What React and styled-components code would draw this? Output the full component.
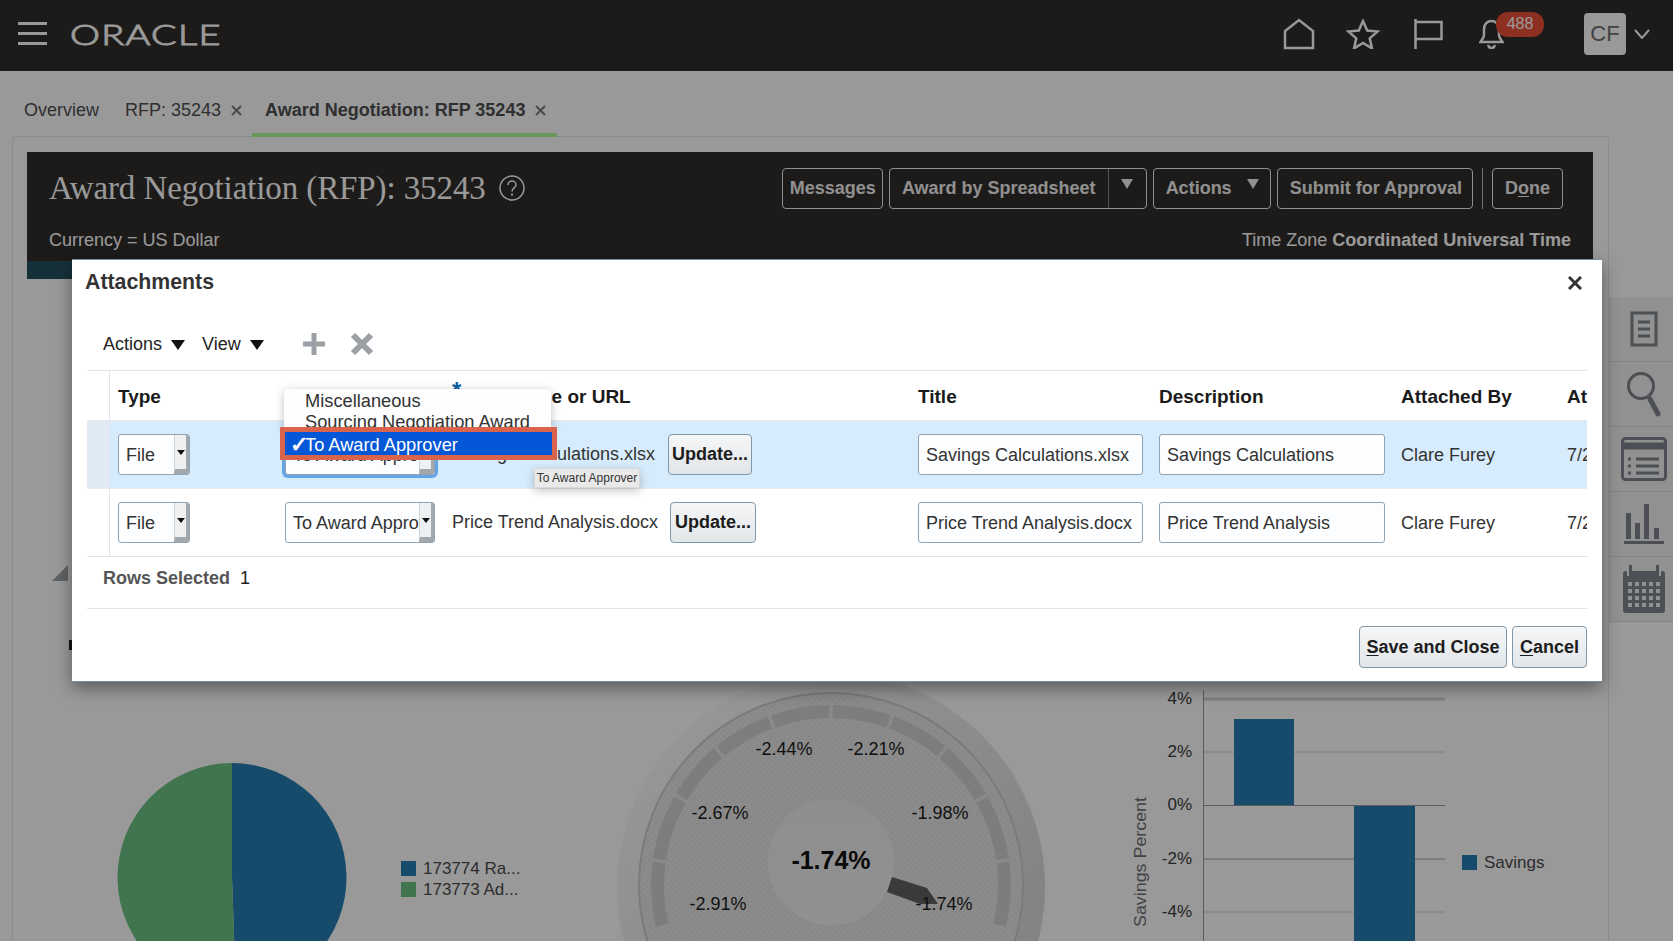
import styled, { createGlobalStyle } from "styled-components";

const Global = createGlobalStyle`
  html, body { margin: 0; padding: 0; background: #fff; }
  body { font-family: "Liberation Sans", Arial, sans-serif; font-size: 18px; color: #333; }
  * { box-sizing: border-box; }
`;

const Page = styled.div`
  position: relative;
  width: 1673px;
  height: 941px;
  overflow: hidden;
  background: #fff;
`;

const Scrim = styled.div`
  position: absolute;
  inset: 0;
  background: rgba(0, 0, 0, 0.4);
`;

/* top bar */
const TopBar = styled.header`
  height: 71px;
  background: #302d2b;
  display: flex;
  align-items: center;
  padding: 0 23px 4px 18px;
  color: #fff;
`;

const Burger = styled.div`
  width: 29px;
  height: 23px;
  display: flex;
  flex-direction: column;
  justify-content: space-between;
  margin-right: 23px;
  span {
    display: block;
    height: 3px;
    background: #fff;
  }
`;

const Logo = styled.div`
  font-family: "Lato", sans-serif;
  font-weight: 300;
  font-size: 28px;
  letter-spacing: 1px;
  transform: scaleX(1.35);
  transform-origin: left center;
  -webkit-text-stroke: 1px #fff;
`;

const TopIcons = styled.div`
  margin-left: auto;
  display: flex;
  align-items: center;
`;

const IconBtn = styled.div`
  position: relative;
  display: flex;
  margin-right: ${(p) => p.$gap}px;
`;

const Badge = styled.span`
  position: absolute;
  left: 17px;
  top: -7px;
  width: 48px;
  height: 25px;
  border-radius: 12px;
  background: #ed5138;
  color: #fff;
  font-size: 16px;
  text-align: center;
  line-height: 24px;
`;

const Avatar = styled.div`
  width: 42px;
  height: 42px;
  border-radius: 4px;
  background: #fff;
  color: #6d6d6d;
  font-size: 22px;
  display: flex;
  align-items: center;
  justify-content: center;
  margin-right: 8px;
  margin-top: 1px;
`;

/* tabs */
const Tabs = styled.nav`
  height: 65px;
  display: flex;
  align-items: flex-end;
  padding-left: 12px;
`;

const Tab = styled.div`
  height: ${(p) => (p.$active ? 66 : 62)}px;
  width: ${(p) => p.$w}px;
  padding-left: ${(p) => p.$pl}px;
  margin-bottom: ${(p) => (p.$active ? -1 : 0)}px;
  display: flex;
  align-items: flex-end;
  padding-bottom: ${(p) => (p.$active ? 12 : 15)}px;
  font-size: 18px;
  line-height: 21px;
  color: #2f2f2f;
  font-weight: ${(p) => (p.$active ? 700 : 400)};
  border-bottom: ${(p) => (p.$active ? "4px solid #68985c" : "none")};
  position: relative;
  z-index: 1;
  white-space: nowrap;
  svg {
    margin: 0 0 5px 10px;
    flex: none;
  }
`;

const Body = styled.div`
  display: flex;
  height: 805px;
`;

const Panel = styled.main`
  width: 1597px;
  margin-left: 12px;
  border: 1px solid #e6ebf0;
  border-bottom: none;
  border-radius: 3px 3px 0 0;
  padding: 15px 15px 0 14px;
`;

const Band = styled.section`
  height: 127px;
  background: linear-gradient(#302d2b 109px, transparent 109px),
    linear-gradient(90deg, #24505f, #3e7183 50%, #2d5b6d);
  color: #fff;
  padding: 15px 22px 0 22px;
`;

const BandRow = styled.div`
  display: flex;
  align-items: center;
  justify-content: space-between;
`;

const Heading = styled.h1`
  margin: 0;
  font-family: "Liberation Serif", Georgia, serif;
  font-weight: 400;
  font-size: 33px;
  letter-spacing: -0.1px;
  line-height: 42px;
  display: flex;
  align-items: center;
  gap: 13px;
  svg { flex: none; }
`;

const Buttons = styled.div`
  display: flex;
  align-items: center;
  gap: 6px;
  margin-right: 8px;
`;

const DarkBtn = styled.div`
  height: 41px;
  padding: 0 ${(p) => p.$pad || 12}px 0 ${(p) => p.$padL || 12}px;
  border: 1px solid #f0f0f0;
  border-radius: 4px;
  display: flex;
  align-items: center;
  position: relative;
  font-weight: 700;
  font-size: 18px;
  color: #f0f0f0;
  u { text-underline-offset: 2px; }
`;

const Caret = styled.span`
  width: 0;
  height: 0;
  border-left: ${(p) => p.$half || 7}px solid transparent;
  border-right: ${(p) => p.$half || 7}px solid transparent;
  border-top: ${(p) => p.$h || 10}px solid ${(p) => p.$color || "#f0f0f0"};
  margin-left: ${(p) => p.$ml || 0}px;
  transform: translateY(${(p) => p.$up || 0}px);
  display: inline-block;
`;

const BtnSplit = styled.span`
  width: 1px;
  align-self: stretch;
  background: #8c8c8c;
  margin: 0 12px;
`;

const BtnRule = styled.span`
  width: 1px;
  height: 41px;
  background: #bdbdbd;
  margin: 0 3px 0 3px;
`;

const SubRow = styled(BandRow)`
  margin-top: 21px;
  font-size: 18px;
`;

const Charts = styled.div`
  display: grid;
  grid-template-columns: 563px 485px 518px;
  height: 662px;
  overflow: hidden;
  svg {
    display: block;
    font-family: "Liberation Sans", Arial, sans-serif;
  }
`;

/* right rail */
const Rail = styled.aside`
  width: 64px;
  margin-top: 161px;
  display: flex;
  flex-direction: column;
  align-self: flex-start;
  background: #f2f2f2;
  border-left: 1px solid #e3e3e3;
`;

const RailItem = styled.div`
  height: 65px;
  display: flex;
  align-items: center;
  justify-content: center;
  border-bottom: 1px solid #dcdcdc;
  padding-left: 4px;
`;

/* dialog */
const Dialog = styled.div`
  position: absolute;
  left: 72px;
  top: 259px;
  width: 1530px;
  height: 423px;
  background: #fff;
  border-top: 1px solid #6f93ad;
  border-bottom: 1px solid #6f93ad;
  box-shadow: 0 6px 16px rgba(0, 0, 0, 0.4);
  padding: 0 15px;
  color: #333;
`;

const DialogHead = styled.div`
  height: 47px;
  margin: 0 -2px;
  display: flex;
  align-items: center;
  justify-content: space-between;
  padding: 0 7px 2px 0;
`;

const DialogTitle = styled.h2`
  margin: 0;
  font-size: 21.3px;
  font-weight: 700;
  color: #333;
`;

const Toolbar = styled.div`
  height: 63px;
  padding: 10px 0 0 16px;
  display: flex;
  align-items: center;
`;

const ToolMenu = styled.div`
  display: flex;
  align-items: center;
  gap: 9px;
  margin-right: 17px;
  padding-top: 2px;
  font-size: 18px;
  color: #222;
`;

const ToolIcon = styled.div`
  display: flex;
  margin-left: ${(p) => p.$ml}px;
`;

const Table = styled.div`
  border-top: 1px solid #dfe4e8;
  border-bottom: 1px solid #dfe4e8;
  overflow: hidden;
`;

const Row = styled.div`
  display: grid;
  grid-template-columns: 23px 167px 167px 466px 241px 242px 166px 28px;
  height: ${(p) => p.$h}px;
  align-items: center;
  background: ${(p) => (p.$selected ? "#d6ebfc" : "transparent")};
  border-bottom: ${(p) => (p.$last ? "none" : "1px solid #e8ecef")};
`;

const Gutter = styled.div`
  align-self: stretch;
  background: ${(p) => (p.$selected ? "#dfeaf4" : "transparent")};
  border-right: 1px solid #dfe4e8;
`;

const Cell = styled.div`
  padding-left: 8px;
  white-space: nowrap;
  overflow: ${(p) => (p.$open ? "visible" : "hidden")};
  font-size: 18px;
  color: #333;
`;

const TextCell = styled(Cell)`
  padding-top: 2px;
`;

const HeadCell = styled(Cell)`
  font-weight: 700;
  font-size: 19px;
  color: #1a1a1a;
  padding-top: 2px;
  overflow: ${(p) => (p.$clip ? "hidden" : "visible")};
  b {
    color: #0a5fa8;
    font-size: 24px;
    line-height: 10px;
    position: relative;
    top: -4px;
    margin-right: 11px;
  }
`;

const FileCell = styled(Cell)`
  display: flex;
  align-items: center;
  gap: ${(p) => p.$gap}px;
  overflow: visible;
`;

const Select = styled.div`
  width: ${(p) => p.$w}px;
  height: 41px;
  display: flex;
  background: #fcfdfe;
  border: 1px solid #8fa3b3;
  border-radius: 3px;
  box-shadow: ${(p) => (p.$focus ? "0 0 0 3px #62a6e6" : "none")};
  overflow: hidden;
`;

const SelectText = styled.span`
  flex: 1;
  min-width: 0;
  overflow: hidden;
  white-space: nowrap;
  padding-left: 7px;
  line-height: 41px;
  font-size: 18px;
`;

const SelectArrow = styled.span`
  width: 15px;
  flex: none;
  display: flex;
  align-items: center;
  justify-content: center;
  background: #eef0f1;
  border-left: 1px solid #cfd3d6;
  border-right: 3px solid #a3a8ac;
  border-bottom: 5px solid #a3a8ac;
`;

const Button = styled.div`
  height: ${(p) => p.$h || 41}px;
  width: ${(p) => p.$w}px;
  display: flex;
  align-items: center;
  justify-content: center;
  flex: none;
  border: 1px solid #7f98aa;
  border-radius: 4px;
  background: linear-gradient(#f5f6f7, #e2e6e9);
  font-weight: 700;
  font-size: 18px;
  color: #1c1c1c;
  white-space: nowrap;
  u { text-underline-offset: 2px; }
`;

const Input = styled.div`
  width: ${(p) => p.$w}px;
  height: 41px;
  padding-left: 7px;
  line-height: 41px;
  background: #fcfdfe;
  border: 1px solid #8fa3b3;
  border-radius: 3px;
  font-size: 18px;
  overflow: hidden;
`;

const RowsInfo = styled.div`
  height: 52px;
  padding: 11px 0 0 16px;
  border-bottom: 1px solid #dfe4e8;
  font-size: 18px;
  color: #1f1f1f;
  strong { color: #555; margin-right: 5px; }
`;

const DialogFoot = styled.div`
  display: flex;
  justify-content: flex-end;
  gap: 5px;
  padding-top: 17px;
`;

const Menu = styled.div`
  position: absolute;
  left: 212px;
  top: 129px;
  width: 267px;
  height: 40px;
  padding: 1px 0 0 21px;
  background: #fdfdfe;
  border-radius: 4px 4px 0 0;
  box-shadow: 0 2px 10px rgba(0, 0, 0, 0.25);
  font-size: 18.25px;
  line-height: 21px;
  color: #333;
  overflow: hidden;
`;

const Picked = styled.div`
  position: absolute;
  left: 208px;
  top: 167px;
  width: 277px;
  height: 33px;
  border: 5px solid #d9634b;
  background: #0457d6;
  color: #fff;
  font-size: 18.25px;
  line-height: 25px;
  padding-left: 5px;
  display: flex;
  span {
    width: 15px;
    font-size: 22px;
    font-weight: 700;
  }
`;

const Tooltip = styled.div`
  position: absolute;
  left: 462px;
  top: 208px;
  width: 106px;
  height: 20px;
  background: #e9e9e9;
  border: 1px solid #d8d8d8;
  box-shadow: 0 3px 10px rgba(0, 0, 0, 0.22);
  font-size: 12px;
  line-height: 18px;
  text-align: center;
  color: #333;
`;

const arc = (r, a) => {
  const t = (a * Math.PI) / 180;
  return [831 + r * Math.sin(t), 885 - r * Math.cos(t)];
};

const segment = (a, b) => {
  const [x1, y1] = arc(180, a);
  const [x2, y2] = arc(180, b);
  const [x3, y3] = arc(167, b);
  const [x4, y4] = arc(167, a);
  return `M${x1} ${y1}A180 180 0 0 1 ${x2} ${y2}L${x3} ${y3}A167 167 0 0 0 ${x4} ${y4}Z`;
};

const stops = [-104, -82, -60, -40, -20, 0, 20, 40, 60, 82, 104];

const gaugeLabels = [
  ["-2.44%", 784, 749],
  ["-2.21%", 876, 749],
  ["-2.67%", 720, 813],
  ["-1.98%", 940, 813],
  ["-2.91%", 718, 904],
  ["-1.74%", 944, 904],
];

const PieChart = () => (
  <svg width="563" height="662" viewBox="27 279 563 662">
    <polygon points="68,565 68,581 52,581" fill="#9ea3a8" />
    <rect x="69" y="640" width="4" height="10" fill="#222" />
    <path d="M232 877.5L232 763A114.500 114.500 0 0 1 236 991.930Z" fill="#257db3" />
    <path d="M232 877.5L232 763A114.500 114.500 0 1 0 236 991.930Z" fill="#6bc384" />
    <rect x="401" y="861" width="15" height="15" fill="#257db3" />
    <rect x="401" y="882" width="15" height="15" fill="#6bc384" />
    <text x="423" y="874" fontSize="17" fill="#4c4c4c">173774 Ra...</text>
    <text x="423" y="895" fontSize="17" fill="#4c4c4c">173773 Ad...</text>
  </svg>
);

const GaugeChart = () => (
  <svg width="485" height="662" viewBox="590 279 485 662">
    <defs>
      <pattern id="dots" width="6" height="6" patternUnits="userSpaceOnUse">
        <rect width="6" height="6" fill="#e8e8e8" />
        <circle cx="1.500" cy="1.500" r="1" fill="#dcdcdc" />
        <circle cx="4.500" cy="4.500" r="1" fill="#dcdcdc" />
      </pattern>
      <linearGradient id="rim" x1="0" y1="0" x2="1" y2="1">
        <stop offset="0.1" stopColor="#fcfcfc" />
        <stop offset="0.75" stopColor="#dcdcdc" />
      </linearGradient>
      <linearGradient id="hub" x1="0" y1="0" x2="0" y2="1">
        <stop offset="0" stopColor="#ededed" />
        <stop offset="1" stopColor="#f2f2f2" />
      </linearGradient>
    </defs>
    <circle cx="831" cy="887" r="214" fill="url(#rim)" />
    <circle cx="831" cy="885" r="192" fill="url(#dots)" stroke="#cdcdcd" strokeWidth="2" />
    {stops.slice(0, -1).map((a, i) => (
      <path key={a} d={segment(a + 0.6, stops[i + 1] - 0.6)} fill="#d0d0d0" />
    ))}
    <circle cx="831" cy="862" r="63" fill="url(#hub)" />
    <polygon points="892,877 927,888 938,904 920,904 887,892" fill="#616161" />
    {gaugeLabels.map(([t, x, y]) => (
      <text key={t + x} x={x} y={y + 6} fontSize="18" fill="#1b1b1b" textAnchor="middle">{t}</text>
    ))}
    <text x="831" y="869" fontSize="25" fontWeight="700" fill="#111" textAnchor="middle">-1.74%</text>
  </svg>
);

const BarChart = () => (
  <svg width="518" height="662" viewBox="1075 279 518 662">
    {[[699, "4%", 3], [752, "2%", 1], [805, "0%", 0], [859, "-2%", 2], [912, "-4%", 1]].map(([y, t, w]) => (
      <g key={t}>
        {w > 0 && <line x1="1203" x2="1445" y1={y} y2={y} stroke="#d2d2d2" strokeWidth={w} />}
        <text x="1192" y={y + 5} fontSize="17" fill="#3c3c3c" textAnchor="end">{t}</text>
      </g>
    ))}
    <rect x="1234" y="719" width="60" height="86" fill="#257db3" />
    <rect x="1354" y="805" width="61" height="140" fill="#257db3" />
    <line x1="1203.500" x2="1203.500" y1="690" y2="941" stroke="#9c9c9c" />
    <line x1="1203" x2="1445" y1="805.500" y2="805.500" stroke="#9c9c9c" />
    <rect x="1462" y="855" width="15" height="15" fill="#257db3" />
    <text x="1484" y="868" fontSize="17" fill="#4c4c4c">Savings</text>
    <text transform="translate(1146 862) rotate(-90)" fontSize="17" fill="#6e6e6e" textAnchor="middle" textLength="130" lengthAdjust="spacingAndGlyphs">Savings Percent</text>
  </svg>
);

const railIcons = [
  <svg key="doc" width="28" height="36" viewBox="0 0 28 36" fill="none" stroke="#7f868c" strokeWidth="3"><rect x="2" y="2" width="24" height="32" /><path d="M8 11h12M8 18h12M8 25h12" /></svg>,
  <svg key="search" width="36" height="46" viewBox="0 0 36 46" fill="none" stroke="#7f868c"><circle cx="15" cy="15" r="12.500" strokeWidth="3" /><path d="M24 28l8 15" strokeWidth="5" strokeLinecap="round" /></svg>,
  <svg key="list" width="46" height="44" viewBox="0 0 46 44" fill="none" stroke="#7f868c" strokeWidth="3"><rect x="1.500" y="1.500" width="43" height="41" rx="3" /><path d="M1 9h44" strokeWidth="7" /><path d="M7 22h3M15 22h23M7 29h3M15 29h23M7 36h3M15 36h23" /></svg>,
  <svg key="bars" width="40" height="40" viewBox="0 0 40 40" fill="#7f868c"><rect x="2" y="9" width="5" height="26" /><rect x="11" y="19" width="5" height="16" /><rect x="20" y="0" width="5" height="35" /><rect x="30" y="24" width="5" height="11" /><rect x="0" y="37" width="40" height="3" /></svg>,
  <svg key="cal" width="44" height="48" viewBox="0 0 44 48"><rect x="1" y="6" width="42" height="42" rx="3" fill="#7f868c" /><rect x="7" y="0" width="3" height="10" fill="#7f868c" /><rect x="34" y="0" width="3" height="10" fill="#7f868c" /><rect x="5" y="5" width="2" height="6" fill="#f2f2f2" /><rect x="37" y="5" width="2" height="6" fill="#f2f2f2" />{[17, 24, 31, 38].flatMap((y) => [6, 13, 20, 27, 34].map((x) => <rect key={x + "-" + y} x={x} y={y} width="4" height="4" fill="#f2f2f2" />))}</svg>,
];

const TypeSelect = ({ w, text, focus }) => (
  <Select $w={w} $focus={focus}>
    <SelectText>{text}</SelectText>
    <SelectArrow><Caret $color="#111" $half={4} $h={5} /></SelectArrow>
  </Select>
);

const TabClose = () => (
  <svg width="11" height="11" viewBox="0 0 11 11" stroke="#4a4a4a" strokeWidth="2"><path d="M1 1l9 9M10 1l-9 9" /></svg>
);

const App = () => {
  return (
    <Page>
      <Global />
      <TopBar>
        <Burger><span /><span /><span /></Burger>
        <Logo>ORACLE</Logo>
        <TopIcons>
          <IconBtn $gap={31}>
            <svg width="32" height="32" viewBox="0 0 32 32" fill="none" stroke="#fff" strokeWidth="2.500"><path d="M2 30V13L16 2l14 11v17Z" /></svg>
          </IconBtn>
          <IconBtn $gap={34}>
            <svg width="34" height="30" viewBox="0 0 34 30" fill="none" stroke="#fff" strokeWidth="2.500"><path d="M17 2l4.200 9.600 10.300 1-7.800 6.800 2.300 10L17 24l-9 5.400 2.300-10-7.800-6.800 10.300-1Z" /></svg>
          </IconBtn>
          <IconBtn $gap={36}>
            <svg width="29" height="30" viewBox="0 0 29 30" fill="none" stroke="#fff" strokeWidth="2.500"><path d="M1.500 0v30M1.500 3h26v17h-26" /></svg>
          </IconBtn>
          <IconBtn $gap={80}>
            <svg width="25" height="30" viewBox="0 0 25 30" fill="none" stroke="#fff" strokeWidth="2.500"><path d="M12.500 2c-5 0-7.500 4-7.500 8v6c0 3-2 5-3.500 7h22c-1.500-2-3.500-4-3.500-7v-6c0-4-2.500-8-7.500-8Z" /><path d="M9 26c.5 2 2 3 3.500 3s3-1 3.500-3" /></svg>
            <Badge>488</Badge>
          </IconBtn>
          <Avatar>CF</Avatar>
          <svg width="16" height="10" viewBox="0 0 16 10" fill="none" stroke="#fff" strokeWidth="2"><path d="M1 1l7 8 7-8" /></svg>
        </TopIcons>
      </TopBar>
      <Tabs>
        <Tab $w={113} $pl={12}>Overview</Tab>
        <Tab $w={127}>RFP: 35243<TabClose /></Tab>
        <Tab $active $w={305} $pl={13}>Award Negotiation: RFP 35243<TabClose /></Tab>
      </Tabs>
      <Body>
        <Panel>
          <Band>
            <BandRow>
              <Heading>
                Award Negotiation (RFP): 35243
                <svg width="26" height="26" viewBox="0 0 26 26" fill="none" stroke="#fff" strokeWidth="1.500"><circle cx="13" cy="13" r="12" /><path d="M9 10c0-2.500 2-4 4-4s4 1.500 4 3.800c0 3-4 3.200-4 6.700" /><path d="M13 18.500v2" strokeWidth="2" /></svg>
              </Heading>
              <Buttons>
                <DarkBtn $padL={7} $pad={6}>Messages</DarkBtn>
                <DarkBtn $pad={13}>Award by Spreadsheet<BtnSplit /><Caret $half={6} $h={10} $up={-4} /></DarkBtn>
                <DarkBtn $pad={11}>Actions<Caret $half={6} $h={10} $ml={15} $up={-4} /></DarkBtn>
                <DarkBtn $pad={10}>Submit for Approval</DarkBtn>
                <BtnRule />
                <DarkBtn>D<u>o</u>ne</DarkBtn>
              </Buttons>
            </BandRow>
            <SubRow>
              <span>Currency = US Dollar</span>
              <span>Time Zone <b>Coordinated Universal Time</b></span>
            </SubRow>
          </Band>
          <Charts>
            <PieChart />
            <GaugeChart />
            <BarChart />
          </Charts>
        </Panel>
        <Rail>
          {railIcons.map((ic) => <RailItem key={ic.key}>{ic}</RailItem>)}
        </Rail>
      </Body>
      <Scrim />
      <Dialog>
        <DialogHead>
          <DialogTitle>Attachments</DialogTitle>
          <svg width="14" height="14" viewBox="0 0 14 14" stroke="#333" strokeWidth="3"><path d="M1 1l12 12M13 1L1 13" /></svg>
        </DialogHead>
        <Toolbar>
          <ToolMenu>Actions <Caret $color="#111" /></ToolMenu>
          <ToolMenu>View <Caret $color="#111" /></ToolMenu>
          <ToolIcon $ml={22}>
            <svg width="22" height="22" viewBox="0 0 22 22" fill="#9aa0a5"><path d="M8.500 0h5v8.500H22v5h-8.500V22h-5v-8.500H0v-5h8.500Z" /></svg>
          </ToolIcon>
          <ToolIcon $ml={25}>
            <svg width="24" height="24" viewBox="0 0 24 24" stroke="#9aa0a5" strokeWidth="6"><path d="M3 3l18 18M21 3L3 21" /></svg>
          </ToolIcon>
        </Toolbar>
        <Table>
          <Row $h={50}>
            <Gutter />
            <HeadCell>Type</HeadCell>
            <HeadCell>Category</HeadCell>
            <HeadCell><b>*</b>File Name or URL</HeadCell>
            <HeadCell>Title</HeadCell>
            <HeadCell>Description</HeadCell>
            <HeadCell>Attached By</HeadCell>
            <HeadCell $clip>Attached Date</HeadCell>
          </Row>
          <Row $h={68} $selected>
            <Gutter $selected />
            <Cell><TypeSelect w={72} text="File" /></Cell>
            <Cell $open><TypeSelect w={150} text="To Award Approver" focus /></Cell>
            <FileCell $gap={13}>
              Savings Calculations.xlsx
              <Button $w={84}>Update...</Button>
            </FileCell>
            <Cell><Input $w={225}>Savings Calculations.xlsx</Input></Cell>
            <Cell><Input $w={226}>Savings Calculations</Input></Cell>
            <TextCell>Clare Furey</TextCell>
            <TextCell>7/21/20</TextCell>
          </Row>
          <Row $h={67} $last>
            <Gutter />
            <Cell><TypeSelect w={72} text="File" /></Cell>
            <Cell><TypeSelect w={150} text="To Award Approver" /></Cell>
            <FileCell $gap={12}>
              Price Trend Analysis.docx
              <Button $w={86}>Update...</Button>
            </FileCell>
            <Cell><Input $w={225}>Price Trend Analysis.docx</Input></Cell>
            <Cell><Input $w={226}>Price Trend Analysis</Input></Cell>
            <TextCell>Clare Furey</TextCell>
            <TextCell>7/21/20</TextCell>
          </Row>
        </Table>
        <RowsInfo><strong>Rows Selected</strong> 1</RowsInfo>
        <DialogFoot>
          <Button $w={148} $h={42}><span><u>S</u>ave and Close</span></Button>
          <Button $w={75} $h={42}><span><u>C</u>ancel</span></Button>
        </DialogFoot>
        <Menu>
          <div>Miscellaneous</div>
          <div>Sourcing Negotiation Award</div>
        </Menu>
        <Picked><span>✓</span>To Award Approver</Picked>
        <Tooltip>To Award Approver</Tooltip>
      </Dialog>
    </Page>
  );
};

export default App;
